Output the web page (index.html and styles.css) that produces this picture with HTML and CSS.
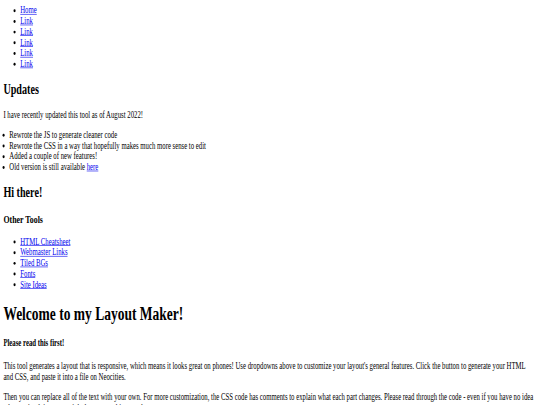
FILE: index.html
```html
<!DOCTYPE html>
<html>
<head>
<meta charset="utf-8">
<title>Layout Maker</title>
<link rel="stylesheet" href="styles.css">
</head>
<body>
<div class="page">
  <ul class="nav">
    <li><a href="#">Home</a></li>
    <li><a href="#">Link</a></li>
    <li><a href="#">Link</a></li>
    <li><a href="#">Link</a></li>
    <li><a href="#">Link</a></li>
    <li><a href="#">Link</a></li>
  </ul>
  <h2>Updates</h2>
  <p>I have recently updated this tool as of August 2022!</p>
  <ul class="updates">
    <li>Rewrote the JS to generate cleaner code</li>
    <li>Rewrote the CSS in a way that hopefully makes much more sense to edit</li>
    <li>Added a couple of new features!</li>
    <li>Old version is still available <a href="#">here</a></li>
  </ul>
  <h2>Hi there!</h2>
  <h3>Other Tools</h3>
  <ul>
    <li><a href="#">HTML Cheatsheet</a></li>
    <li><a href="#">Webmaster Links</a></li>
    <li><a href="#">Tiled BGs</a></li>
    <li><a href="#">Fonts</a></li>
    <li><a href="#">Site Ideas</a></li>
  </ul>
  <h1>Welcome to my Layout Maker!</h1>
  <h4>Please read this first!</h4>
  <p>This tool generates a layout that is responsive, which means it looks great on phones! Use dropdowns above to customize your layout's general features. Click the button to generate your HTML and&nbsp;CSS, and paste it into a file on Neocities.</p>
  <p>Then you can replace all of the text with your own. For more customization, the CSS code has comments to explain what each part changes. Please read through the code - even if you have no idea what you're doing, you might learn something new!</p>
</div>
</body>
</html>
```
FILE: styles.css
```css
html, body {
  margin: 0;
  padding: 0;
  background: #ffffff;
  overflow: hidden;
}

.page {
  width: 1264px;
  padding: 0 8px;
  font-family: "Liberation Serif", "Times New Roman", serif;
  font-size: 16px;
  color: #000000;
  transform: scale(0.421875, 0.596);
  transform-origin: 0 0;
}

.page a {
  color: #0000ee;
}

.nav {
  margin-top: 4.6px;
}

.updates {
  padding-left: 14px;
}
```
